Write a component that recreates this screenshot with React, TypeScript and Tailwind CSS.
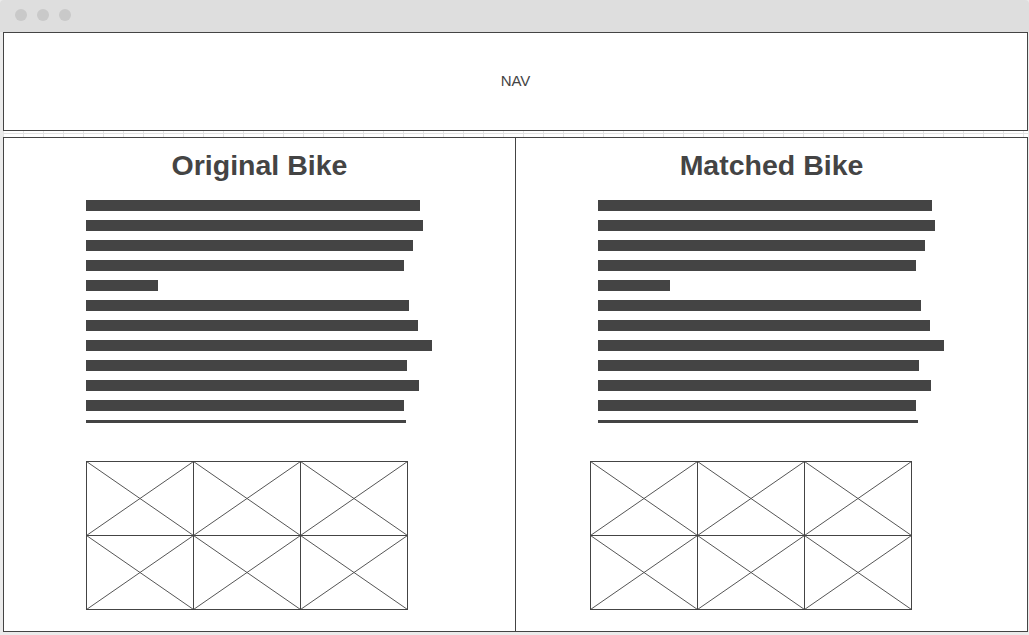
const bars = [334, 337, 327, 318, 72, 323, 332, 346, 321, 333, 318];

function ImageGrid() {
  const xs = [0.5, 107.5, 214.5, 321.5];
  const ys = [0.5, 74.5, 148.5];
  const cells: [number, number, number, number][] = [];
  for (let r = 0; r < 2; r++) {
    for (let c = 0; c < 3; c++) {
      cells.push([xs[c], ys[r], xs[c + 1], ys[r + 1]]);
    }
  }

  return (
    <svg width="322" height="149" viewBox="0 0 322 149" className="block">
      {cells.map(([x1, y1, x2, y2], i) => (
        <g key={i} stroke="#555" strokeWidth="1">
          <line x1={x1} y1={y1} x2={x2} y2={y2} />
          <line x1={x2} y1={y1} x2={x1} y2={y2} />
        </g>
      ))}
      <g stroke="#444" strokeWidth="1" fill="none">
        {xs.map((x) => (
          <line key={x} x1={x} y1={0} x2={x} y2={149} />
        ))}
        {ys.map((y) => (
          <line key={y} x1={0} y1={y} x2={322} y2={y} />
        ))}
      </g>
    </svg>
  );
}

function BikeColumn({ title, imageOffset }: { title: string; imageOffset: string }) {
  return (
    <div className="flex flex-col">
      <h2 className="pt-[11px] text-center text-[28.5px] font-bold leading-[32px]">
        {title}
      </h2>
      <div className="ml-[82px] mt-[19px] flex flex-col gap-[9px]">
        {bars.map((w, i) => (
          <div key={i} className="h-[11px] bg-[#444]" style={{ width: w }} />
        ))}
        <div className="h-[3px] w-[320px] bg-[#444]" />
      </div>
      <div className={`mt-[38px] ${imageOffset}`}>
        <ImageGrid />
      </div>
    </div>
  );
}

export default function App() {
  return (
    <div className="h-[635px] w-[1029px] overflow-hidden bg-[#ebebeb] font-['Liberation_Sans',Arial,sans-serif] text-[#444]">
      <div className="flex h-[32px] gap-[10px] rounded-t-[4px] bg-[#dedede] pl-[15px] pt-[9px]">
        <span className="h-3 w-3 rounded-full bg-[#c9c9c9]" />
        <span className="h-3 w-3 rounded-full bg-[#c9c9c9]" />
        <span className="h-3 w-3 rounded-full bg-[#c9c9c9]" />
      </div>

      <div className="ml-[3px] mr-[1px] flex h-[600px] flex-col bg-white bg-[linear-gradient(to_right,#e3e3e3_1px,transparent_1px),linear-gradient(to_bottom,#e3e3e3_1px,transparent_1px)] bg-[size:20px_20px] bg-[position:0_1px]">
        <div className="flex h-[99px] items-center justify-center border border-[#444] bg-white text-[15px]">
          NAV
        </div>

        <div className="mt-[6px] flex h-[495px] border border-[#444] bg-white">
          <div className="w-[512px] border-r border-[#444]">
            <BikeColumn title="Original Bike" imageOffset="ml-[82px]" />
          </div>
          <div className="flex-1">
            <BikeColumn title="Matched Bike" imageOffset="ml-[74px]" />
          </div>
        </div>
      </div>
    </div>
  );
}
